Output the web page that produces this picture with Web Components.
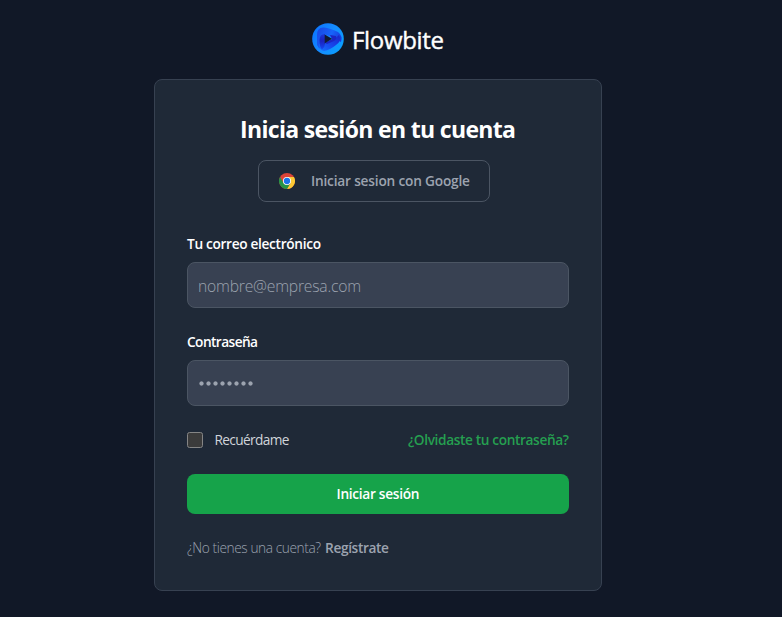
<!DOCTYPE html>
<html lang="es">
<head>
<meta charset="utf-8">
<title>Flowbite</title>
<style>
html,body{margin:0;height:100%;background:#111827;overflow:hidden}
body{font-family:"Open Sans","Noto Sans",sans-serif;color:#fff}
</style>
</head>
<body>
<login-page></login-page>
<script>
const define=(name,html,setup)=>customElements.define(name,class extends HTMLElement{
  connectedCallback(){
    if(this.shadowRoot)return;
    const t=document.createElement('template');
    t.innerHTML=html;
    this.attachShadow({mode:'open'}).append(t.content.cloneNode(true));
    if(setup)setup(this,this.shadowRoot);
  }
});

/* A single line of text tracked so that it fills the given width. */
define('fit-text','<style>:host{display:inline-block;white-space:nowrap;text-align:left}span{display:inline-block}</style><span><slot></slot></span>',(el,root)=>{
  const w=+el.getAttribute('width'),s=root.querySelector('span'),n=el.textContent.length;
  el.style.width=w+'px';
  s.style.letterSpacing=(w-s.getBoundingClientRect().width)/(n-1)+'px';
});

define('brand-logo',`<style>
:host{display:flex;height:32px;align-items:center;gap:8px;font-size:24px;font-weight:500;line-height:32px}
svg{width:32px;height:32px;display:block}
::slotted(*){padding-top:2px;-webkit-text-stroke:.4px #fff}
</style>
<svg viewBox="0 0 32 32">
<defs>
<linearGradient id="a" x1="0" y1=".2" x2="1" y2=".8"><stop offset="0" stop-color="#0b74ff"/><stop offset=".5" stop-color="#158cff"/><stop offset="1" stop-color="#09a0ff"/></linearGradient>
<linearGradient id="b" x1="0" y1=".3" x2="1" y2=".7"><stop offset="0" stop-color="#1a4be6"/><stop offset=".5" stop-color="#1664fa"/><stop offset="1" stop-color="#1a30d4"/></linearGradient>
<linearGradient id="c" x1="1" y1="0" x2="0" y2="1"><stop offset="0" stop-color="#1a24c8"/><stop offset=".5" stop-color="#1744ea"/><stop offset="1" stop-color="#1474ff"/></linearGradient>
<linearGradient id="d" x1="0" y1="0" x2="0" y2="1"><stop offset="0" stop-color="#1b36d8"/><stop offset=".45" stop-color="#1a22bd"/><stop offset="1" stop-color="#1548f2"/></linearGradient>
</defs>
<circle cx="16" cy="16" r="15.8" fill="url(#a)"/>
<path d="M5 22V12Q5 4 12 4.500Q18 5 26 9Q31 13 29 19L20 14L13 11.500L9 14V26Q6 25 5 22Z" fill="url(#b)"/>
<path d="M27 12Q30 18 24 22Q18 27 12 28Q7 27 7 21L12.500 20.500Q20 19 27 12Z" fill="url(#c)"/>
<path d="M7.500 17Q7.500 11 13 11V21Q12.500 25 10 26.500Q7.500 24 7.500 17Z" fill="url(#d)"/>
<path d="M18 12L24 13Q25 16 22 18L15 21L13 20L20 16Z" fill="#1b25c4"/>
<path d="M12.700 11.500V20.500L20 15.800Z" fill="#111a36"/>
</svg><slot></slot>`);

define('google-button',`<style>
:host{display:flex;box-sizing:border-box;width:232px;height:42px;border:1px solid #4b5563;border-radius:8px;align-items:center;padding-left:20px;gap:16px;color:#9ca3af;font-size:13.7px;font-weight:600;line-height:20px}
svg{width:16px;height:16px;display:block}
</style>
<svg viewBox="0 0 48 48">
<circle cx="24" cy="24" r="24" fill="#dc4437"/>
<path d="M44.800 12A24 24 0 0 1 24 48L34.400 30L24 12Z" fill="#fcc934"/>
<path d="M3.200 12A24 24 0 0 0 24 48L34.400 30L24 36L13.600 30Z" fill="#259447"/>
<circle cx="24" cy="24" r="12" fill="#fff"/><circle cx="24" cy="24" r="9.500" fill="#1a73e8"/>
</svg><slot></slot>`);

define('form-field',`<style>
:host{display:block}
.label{display:block;font-size:13.7px;line-height:20px;font-weight:600;height:20px;margin-bottom:8px}
.box{display:flex;align-items:center;box-sizing:border-box;height:46px;padding:1px 10px 0;border:1px solid #4b5563;border-radius:8px;background:#384152;color:#9ca3af;font-size:15.7px;font-weight:300;line-height:24px}
</style><div class="label"><slot name="label"></slot></div><div class="box"><slot></slot></div>`);

define('password-dots',`<style>
:host{display:flex;gap:2px;padding:0 0 0 1px}i{width:5px;height:5px;background:radial-gradient(circle,#9ca3af 1.7px,transparent 2.5px)}
</style><i></i><i></i><i></i><i></i><i></i><i></i><i></i><i></i>`);

define('check-option',`<style>
:host{display:flex;align-items:center;gap:11.5px;font-size:13.7px;line-height:20px;color:#d1d5db}
b{box-sizing:border-box;width:16px;height:16px;border:1px solid #858585;border-radius:2.5px;background:#3b3b3b}
</style><b></b><slot></slot>`);

define('primary-button',`<style>
:host{display:flex;height:40px;align-items:center;justify-content:center;background:#16a34a;border-radius:8px;font-size:13.7px;font-weight:600;line-height:20px}
</style><slot></slot>`);

define('login-card',`<style>
:host{display:flex;flex-direction:column;box-sizing:border-box;width:448px;height:512px;padding:32px;border:1px solid #374151;border-radius:8px;background:#1f2937}
</style><slot></slot>`);

define('login-page',`<style>
:host{display:flex;flex-direction:column;align-items:center;box-sizing:border-box;width:756px;height:617px;padding-top:23px}
login-card{margin-top:24px}
h1{margin:1px 0 0;font-size:23px;line-height:32px;font-weight:700;text-align:center;height:32px}
google-button{margin:15px 0 0 71px}
.email{margin-top:32px}.pass{margin-top:24px}
.row{display:flex;justify-content:space-between;align-items:center;height:20px;margin-top:24px;font-size:13.7px;line-height:20px}
.forgot{color:#259f50;font-weight:600}
primary-button{margin-top:24px}
p{display:flex;gap:4px;margin:24px 0 0;font-size:13.7px;line-height:20px;color:#9ca3af;font-weight:300}
p .strong{font-weight:600}
</style>
<brand-logo><fit-text width="92">Flowbite</fit-text></brand-logo>
<login-card>
<h1><fit-text width="276">Inicia sesión en tu cuenta</fit-text></h1>
<google-button><fit-text width="159">Iniciar sesion con Google</fit-text></google-button>
<form-field class="email"><fit-text slot="label" width="134">Tu correo electrónico</fit-text><fit-text width="163">nombre@empresa.com</fit-text></form-field>
<form-field class="pass"><fit-text slot="label" width="71">Contraseña</fit-text><password-dots></password-dots></form-field>
<div class="row"><check-option><fit-text width="75">Recuérdame</fit-text></check-option><fit-text class="forgot" width="161">¿Olvidaste tu contraseña?</fit-text></div>
<primary-button><fit-text width="83">Iniciar sesión</fit-text></primary-button>
<p><fit-text width="134">¿No tienes una cuenta?</fit-text><fit-text class="strong" width="64">Regístrate</fit-text></p>
</login-card>`);
</script>
</body>
</html>
